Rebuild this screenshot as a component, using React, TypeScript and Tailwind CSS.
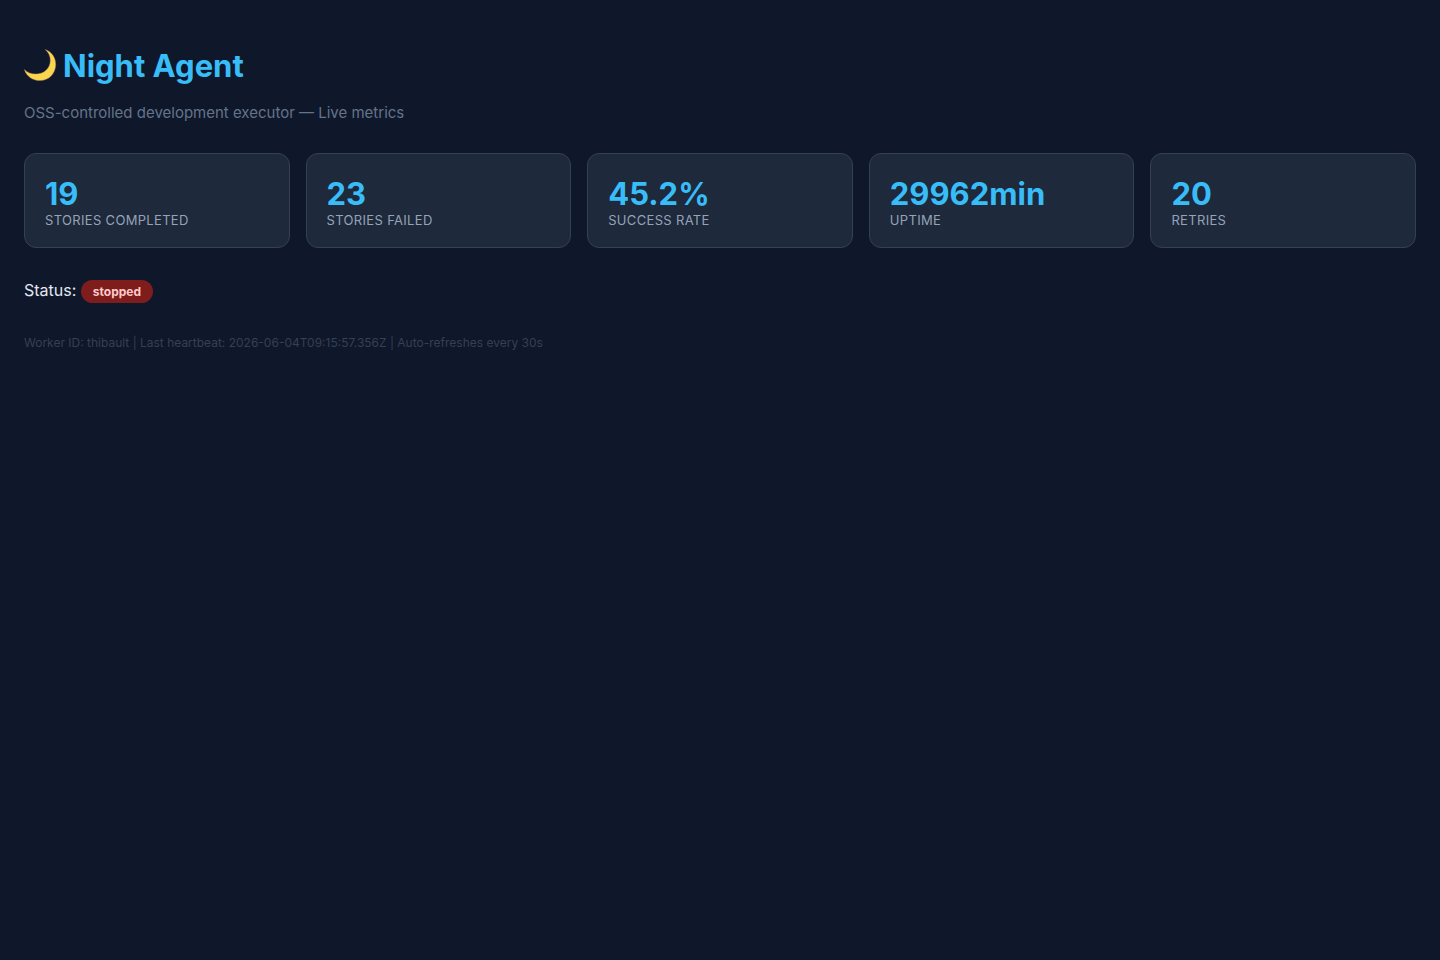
const metrics = [
  { value: "19", label: "Stories Completed" },
  { value: "23", label: "Stories Failed" },
  { value: "45.2%", label: "Success Rate" },
  { value: "29962min", label: "Uptime" },
  { value: "20", label: "Retries" },
];

function Moon() {
  return (
    <svg viewBox="0 1 32 32" className="h-8 w-8 shrink-0 overflow-visible" aria-hidden="true">
      <path
        d="M21.2 0.6C27.800 2.900 31.700 8.800 31.700 15.500C31.700 24.600 24.800 31.600 16 31.600C8.800 31.600 2.600 27.500 0.300 20.500C3.300 23.500 7.200 25 11.800 25C20.500 25 26.300 19.100 26.300 11.300C26.300 7.100 24.400 3.300 21.200 0.600Z"
        fill="#fad64e"
        stroke="#b9806a"
        strokeWidth="0.4"
      />
    </svg>
  );
}

export default function App() {
  return (
    <main className="min-h-screen bg-[#0f172a] px-6 pt-[46px] font-['Inter',sans-serif] text-base text-[#e2e8f0]">
      <h1 className="flex items-center gap-[7px] text-[31px] leading-10 font-bold text-[#38bdf8]">
        <Moon />
        Night Agent
      </h1>
      <p className="mt-[17px] text-[15px] leading-5 text-[#64748b]">
        OSS-controlled development executor — Live metrics
      </p>
      <section className="mt-[30px] grid grid-cols-5 gap-4">
        {metrics.map((m) => (
          <div key={m.label} className="rounded-xl border border-[#334155] bg-[#1e293b] p-5">
            <div className="text-[31px] leading-10 font-bold text-[#38bdf8]">{m.value}</div>
            <div className="text-[13px] leading-[13px] tracking-wide text-[#94a3b8] uppercase">{m.label}</div>
          </div>
        ))}
      </section>
      <p className="mt-8 leading-5">
        Status:{" "}
        <span className="inline-block rounded-full bg-[#7f1d1d] px-3 py-1 text-xs leading-[15px] font-bold text-[#fecaca]">
          stopped
        </span>
      </p>
      <footer className="mt-8 text-xs leading-4 text-[#334155]">
        Worker ID: thibault | Last heartbeat: 2026-06-04T09:15:57.356Z | Auto-refreshes every 30s
      </footer>
    </main>
  );
}
